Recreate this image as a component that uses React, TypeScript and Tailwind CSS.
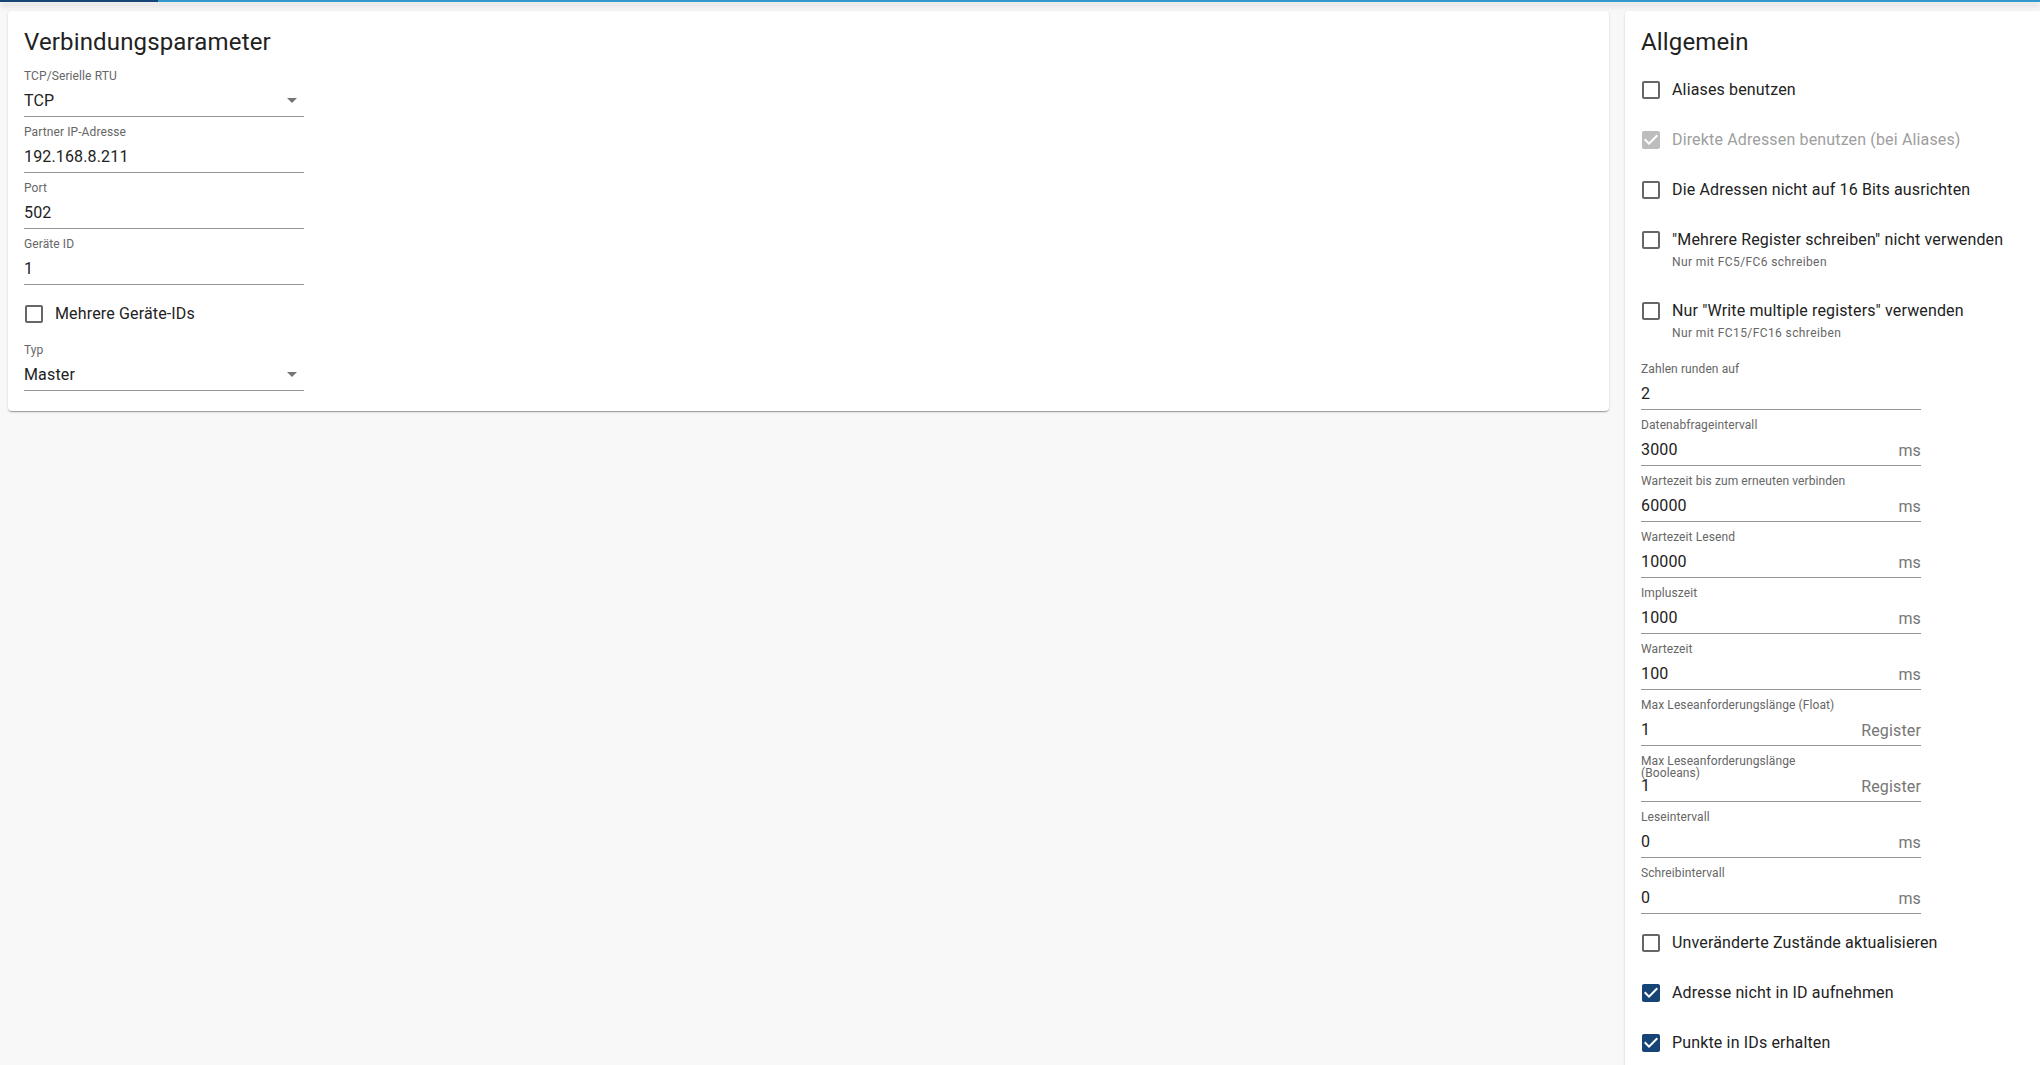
import React from "react";

type FieldProps = {
  label: string;
  value: string;
  unit?: string;
  select?: boolean;
  wrapLabel?: boolean;
};

function Field({ label, value, unit, select, wrapLabel }: FieldProps) {
  return (
    <div className="h-14 w-[280px] flex flex-col justify-end">
      {wrapLabel ? (
        <div className="h-4 pt-[2px] text-xs leading-3 text-[#666] max-w-[200px] relative z-10 tracking-[0.1px]">{label}</div>
      ) : (
        <div className="h-4 text-xs leading-4 text-[#666] tracking-[0.1px]">{label}</div>
      )}
      <div className="h-[33px] pt-[2px] flex items-center border-b border-[#949494] text-base text-[#222] tracking-[0.15px]">
        <span className="flex-1">{value}</span>
        {unit && <span className="text-[#767676] pt-[2px]">{unit}</span>}
        {select && (
          <svg viewBox="0 0 24 24" className="w-6 h-6 fill-[#757575] -mt-[2px]">
            <path d="M7 10l5 5 5-5z" />
          </svg>
        )}
      </div>
    </div>
  );
}

type CheckProps = {
  label: string;
  checked?: boolean;
  disabled?: boolean;
  rowClass?: string;
};

function Check({ label, checked, disabled, rowClass = "h-[50px]" }: CheckProps) {
  const color = disabled ? "fill-[#bdbdbd]" : checked ? "fill-[#164477]" : "fill-[#666]";
  return (
    <div className={`flex items-center -ml-[11px] ${rowClass}`}>
      <div className="w-[42px] h-[42px] flex items-center justify-center">
        <svg viewBox="0 0 24 24" className={`w-6 h-6 ${color}`}>
          {checked ? (
            <path d="M19 3H5c-1.11 0-2 .9-2 2v14c0 1.1.89 2 2 2h14c1.11 0 2-.9 2-2V5c0-1.1-.89-2-2-2zm-9 14l-5-5 1.41-1.41L10 14.17l7.59-7.59L19 8l-9 9z" />
          ) : (
            <path d="M19 5v14H5V5h14m0-2H5c-1.1 0-2 .9-2 2v14c0 1.1.9 2 2 2h14c1.1 0 2-.9 2-2V5c0-1.1-.9-2-2-2z" />
          )}
        </svg>
      </div>
      <span className={`text-base tracking-[0.15px] ${disabled ? "text-[#9e9e9e]" : "text-[#222]"}`}>{label}</span>
    </div>
  );
}

function Helper({ text, last }: { text: string; last?: boolean }) {
  return (
    <div className={`-mt-[11px] pl-[31px] text-xs leading-4 tracking-[0.4px] text-[#666] ${last ? "mb-[13px]" : "mb-4"}`}>
      {text}
    </div>
  );
}

const paper =
  "bg-white rounded shadow-[0_2px_1px_-1px_rgba(0,0,0,0.2),0_1px_1px_0_rgba(0,0,0,0.14),0_1px_3px_0_rgba(0,0,0,0.12)]";

export default function App() {
  const timing = [
    { label: "Zahlen runden auf", value: "2" },
    { label: "Datenabfrageintervall", value: "3000", unit: "ms" },
    { label: "Wartezeit bis zum erneuten verbinden", value: "60000", unit: "ms" },
    { label: "Wartezeit Lesend", value: "10000", unit: "ms" },
    { label: "Impluszeit", value: "1000", unit: "ms" },
    { label: "Wartezeit", value: "100", unit: "ms" },
    { label: "Max Leseanforderungslänge (Float)", value: "1", unit: "Register" },
    { label: "Max Leseanforderungslänge (Booleans)", value: "1", unit: "Register", wrapLabel: true },
    { label: "Leseintervall", value: "0", unit: "ms" },
    { label: "Schreibintervall", value: "0", unit: "ms" },
  ];

  return (
    <div className="h-screen overflow-hidden bg-[#f8f8f8] font-['Roboto',sans-serif]">
      <div className="relative z-10 h-[2px] flex shadow-[0_2px_4px_-1px_rgba(0,0,0,0.2),0_4px_5px_0_rgba(0,0,0,0.14),0_1px_10px_0_rgba(0,0,0,0.12)]">
        <div className="w-[158px] bg-[#164477]" />
        <div className="flex-1 bg-[#3399cc]" />
      </div>

      <div className="flex items-start gap-4 px-2 pt-[9px]">
        <div className={`${paper} w-[1601px] shrink-0 px-4 pt-[15px] pb-5`}>
          <h2 className="text-2xl leading-8 text-[#222] tracking-[0.15px] mb-[3px]">Verbindungsparameter</h2>
          <Field label="TCP/Serielle RTU" value="TCP" select />
          <Field label="Partner IP-Adresse" value="192.168.8.211" />
          <Field label="Port" value="502" />
          <Field label="Geräte ID" value="1" />
          <Check label="Mehrere Geräte-IDs" rowClass="mt-2 h-[42px]" />
          <Field label="Typ" value="Master" select />
        </div>

        <div className={`${paper} w-[440px] shrink-0 px-4 pt-[15px] pb-4`}>
          <h2 className="text-2xl leading-8 text-[#222] tracking-[0.15px] mb-[7px]">Allgemein</h2>
          <Check label="Aliases benutzen" />
          <Check label="Direkte Adressen benutzen (bei Aliases)" checked disabled />
          <Check label="Die Adressen nicht auf 16 Bits ausrichten" />
          <Check label={'"Mehrere Register schreiben" nicht verwenden'} />
          <Helper text="Nur mit FC5/FC6 schreiben" />
          <Check label={'Nur "Write multiple registers" verwenden'} />
          <Helper text="Nur mit FC15/FC16 schreiben" last />
          {timing.map((f) => (
            <Field key={f.label} {...f} />
          ))}
          <Check label="Unveränderte Zustände aktualisieren" rowClass="mt-1 h-[50px]" />
          <Check label="Adresse nicht in ID aufnehmen" checked />
          <Check label="Punkte in IDs erhalten" checked />
        </div>
      </div>
    </div>
  );
}
